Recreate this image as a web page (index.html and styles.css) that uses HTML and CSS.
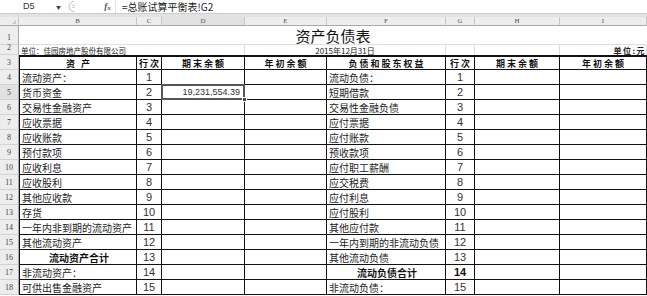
FILE: index.html
```html
<!DOCTYPE html>
<html lang="zh-CN">
<head>
<meta charset="utf-8">
<title>资产负债表</title>
<link rel="stylesheet" href="styles.css">
</head>
<body>
<div class="app">
  <div class="fbar">
    <div class="namebox"><span class="ref">D5</span><span class="dd">▼</span></div>
    <div class="grip"><svg width="12" height="11" viewBox="0 0 12 11"><path d="M8 0.5 A5 5 0 0 0 8 10.5" fill="none" stroke="#bdbdbd"/><path d="M6 4.5h3M6 6.5h3" stroke="#cfcfcf"/></svg></div>
    <div class="fx"><span class="fi">f</span><span class="xs">x</span></div>
    <div class="formula">=总账试算平衡表!G2</div>
  </div>
  <div class="gap"></div>
  <div class="sheet">
    <div class="ch corner"><span class="tri"></span></div>
    <div class="ch">B</div><div class="ch">C</div><div class="ch chsel">D</div><div class="ch">E</div><div class="ch">F</div><div class="ch">G</div><div class="ch">H</div><div class="ch">I</div>

    <div class="rh">1</div>
    <div class="title">资产负债表</div>

    <div class="rh">2</div>
    <div class="r2 unit">单位：佳园房地产股份有限公司</div>
    <div class="r2 date">2015年12月31日</div>
    <div class="r2"></div>
    <div class="r2"></div>
    <div class="r2 yuan">单位:元</div>

    <div class="rh">3</div>
    <div class="hd hb">资 产</div><div class="hd">行次</div><div class="hd">期末余额</div><div class="hd">年初余额</div>
    <div class="hd">负债和股东权益</div><div class="hd">行次</div><div class="hd">期末余额</div><div class="hd">年初余额</div>

    <div class="rh">4</div>
    <div class="c b">流动资产：</div><div class="c n">1</div><div class="c"></div><div class="c"></div>
    <div class="c f">流动负债：</div><div class="c n">1</div><div class="c"></div><div class="c"></div>

    <div class="rh rhsel">5</div>
    <div class="c b">货币资金</div><div class="c n">2</div>
    <div class="c sel"><span class="val">19,231,554.39</span><span class="selbox"></span><span class="handle"></span></div><div class="c"></div>
    <div class="c f">短期借款</div><div class="c n">2</div><div class="c"></div><div class="c"></div>

    <div class="rh">6</div>
    <div class="c b">交易性金融资产</div><div class="c n">3</div><div class="c"></div><div class="c"></div>
    <div class="c f">交易性金融负债</div><div class="c n">3</div><div class="c"></div><div class="c"></div>

    <div class="rh">7</div>
    <div class="c b">应收票据</div><div class="c n">4</div><div class="c"></div><div class="c"></div>
    <div class="c f">应付票据</div><div class="c n">4</div><div class="c"></div><div class="c"></div>

    <div class="rh">8</div>
    <div class="c b">应收账款</div><div class="c n">5</div><div class="c"></div><div class="c"></div>
    <div class="c f">应付账款</div><div class="c n">5</div><div class="c"></div><div class="c"></div>

    <div class="rh">9</div>
    <div class="c b">预付款项</div><div class="c n">6</div><div class="c"></div><div class="c"></div>
    <div class="c f">预收款项</div><div class="c n">6</div><div class="c"></div><div class="c"></div>

    <div class="rh">10</div>
    <div class="c b">应收利息</div><div class="c n">7</div><div class="c"></div><div class="c"></div>
    <div class="c f">应付职工薪酬</div><div class="c n">7</div><div class="c"></div><div class="c"></div>

    <div class="rh">11</div>
    <div class="c b">应收股利</div><div class="c n">8</div><div class="c"></div><div class="c"></div>
    <div class="c f">应交税费</div><div class="c n">8</div><div class="c"></div><div class="c"></div>

    <div class="rh">12</div>
    <div class="c b">其他应收款</div><div class="c n">9</div><div class="c"></div><div class="c"></div>
    <div class="c f">应付利息</div><div class="c n">9</div><div class="c"></div><div class="c"></div>

    <div class="rh">13</div>
    <div class="c b">存货</div><div class="c n">10</div><div class="c"></div><div class="c"></div>
    <div class="c f">应付股利</div><div class="c n">10</div><div class="c"></div><div class="c"></div>

    <div class="rh">14</div>
    <div class="c b">一年内非到期的流动资产</div><div class="c n">11</div><div class="c"></div><div class="c"></div>
    <div class="c f">其他应付款</div><div class="c n">11</div><div class="c"></div><div class="c"></div>

    <div class="rh">15</div>
    <div class="c b">其他流动资产</div><div class="c n">12</div><div class="c"></div><div class="c"></div>
    <div class="c f">一年内到期的非流动负债</div><div class="c n">12</div><div class="c"></div><div class="c"></div>

    <div class="rh">16</div>
    <div class="c b tot">流动资产合计</div><div class="c n">13</div><div class="c"></div><div class="c"></div>
    <div class="c f">其他流动负债</div><div class="c n">13</div><div class="c"></div><div class="c"></div>

    <div class="rh">17</div>
    <div class="c b">非流动资产：</div><div class="c n">14</div><div class="c"></div><div class="c"></div>
    <div class="c f tot">流动负债合计</div><div class="c n bn">14</div><div class="c"></div><div class="c"></div>

    <div class="rh">18</div>
    <div class="c b">可供出售金融资产</div><div class="c n">15</div><div class="c"></div><div class="c"></div>
    <div class="c f">非流动负债：</div><div class="c n">15</div><div class="c"></div><div class="c"></div>
  </div>
</div>
</body>
</html>
```

FILE: styles.css
```css
* { box-sizing: border-box; margin: 0; padding: 0; }
html, body { width: 647px; height: 296px; overflow: hidden; background: #fff; }
body { font-family: "Noto Sans CJK SC", "Noto Sans", sans-serif; color: #1e1e1e; }

.fbar { display: flex; height: 14px; border-bottom: 1px solid #cdcdcd; background: #fff; }
.namebox { width: 64px; display: flex; align-items: center; }
.ref { margin-left: 23px; font: 9px/1 "Liberation Sans", sans-serif; color: #333; }
.dd { margin-left: auto; margin-right: 3px; font-size: 5px; line-height: 1; color: #444; }
.grip { width: 36px; display: flex; align-items: center; padding-left: 2px; }
.fx { width: 15px; display: flex; align-items: center; justify-content: center; font: italic 700 9px/1 "Liberation Serif", serif; color: #555; }
.fx .xs { font-size: 7px; margin-top: 3px; }
.formula { flex: 1; display: flex; align-items: center; border-left: 1px solid #e2e2e2; padding-left: 6px; padding-top: 1px; font-size: 10px; line-height: 12px; color: #222; white-space: nowrap; }
.gap { height: 3px; background: #e2e2e2; }

.sheet {
  display: grid;
  grid-template-columns: 19px 118px 25px 83px 82px 119px 29px 85px 87px;
  grid-template-rows: 9px 19px 10px 15px repeat(15, 15px);
}

.ch {
  background: #ededed;
  border-right: 1px solid #c6c6c6;
  border-bottom: 1px solid #a9a9a9;
  font: 7px/8px "Liberation Serif", serif;
  color: #555;
  text-align: center;
}
.chsel { background: #e1e1e1; }
.corner { position: relative; }
.tri { position: absolute; right: 2px; bottom: 1px; width: 0; height: 0; border-left: 4px solid transparent; border-bottom: 4px solid #c9c9c9; }

.rh {
  background: #ededed;
  border-right: 1px solid #a9a9a9;
  border-bottom: 1px solid #d2d2d2;
  font: 8px/1 "Liberation Serif", serif;
  color: #444;
  display: flex;
  align-items: flex-end;
  justify-content: center;
  padding-bottom: 2px;
}
.rhsel { background: #e1e1e1; }

.title {
  grid-column: span 8;
  display: flex;
  align-items: center;
  justify-content: center;
  font-size: 15px;
  color: #111;
  border-bottom: 1px solid #dedede;
}

.r2 { border-right: 1px solid #dedede; font-size: 8px; display: flex; align-items: center; white-space: nowrap; color: #222; }
.unit { grid-column: span 3; padding-left: 2px; font-size: 7.5px; }
.date { grid-column: span 2; justify-content: center; }
.yuan { justify-content: flex-end; font-weight: 700; letter-spacing: 1.5px; padding-right: 0; }

.hd {
  border-top: 2px solid #111;
  border-right: 1px solid #111;
  border-bottom: 1px solid #111;
  display: flex;
  align-items: center;
  justify-content: center;
  font-size: 9px;
  font-weight: 700;
  letter-spacing: 2px;
  padding-left: 2px;
  white-space: nowrap;
  color: #111;
}
.hb { border-left: 1px solid #111; }

.c {
  border-right: 1px solid #111;
  border-bottom: 1px solid #111;
  display: flex;
  align-items: center;
  padding-top: 1px;
  font-size: 10px;
  white-space: nowrap;
  color: #222;
}
.b { border-left: 1px solid #111; padding-left: 2px; }
.f { padding-left: 2px; }
.n { justify-content: center; font: 11px/1 "Liberation Sans", sans-serif; color: #333; }
.tot { justify-content: center; font-weight: 700; color: #111; }
.bn { font-weight: 700; color: #111; }

.sel { position: relative; }
.val { margin-left: auto; padding-right: 4px; font: 9px/1 "Liberation Sans", sans-serif; color: #333; }
.selbox { position: absolute; left: -1px; top: -1px; right: -1px; bottom: -1px; border: 2px solid #555; }
.handle { position: absolute; right: -3px; bottom: -3px; width: 5px; height: 5px; background: #444; border: 1px solid #fff; }
```
